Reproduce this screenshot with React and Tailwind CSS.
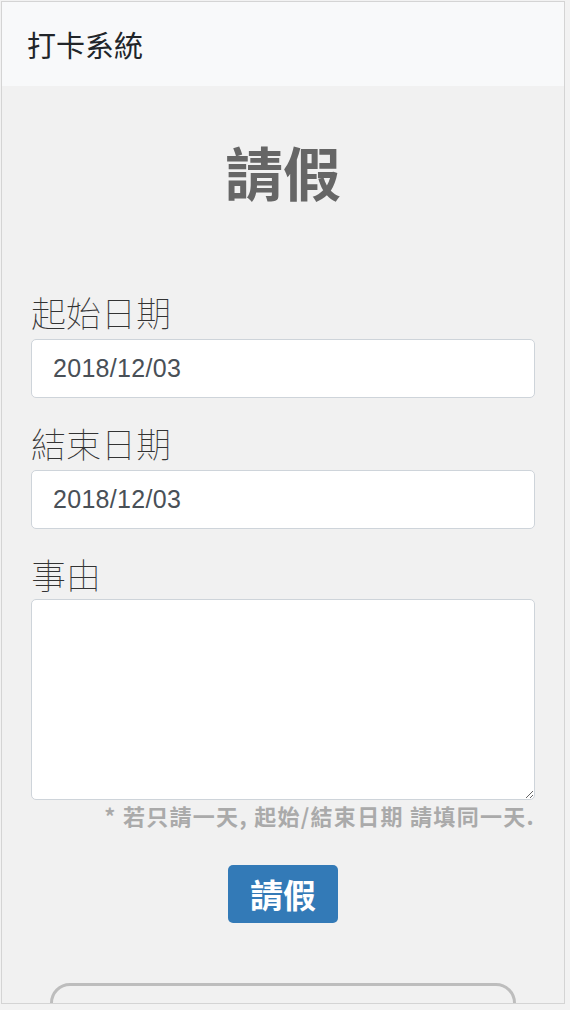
import React, { useState } from "react";

const font = { fontFamily: '"Noto Sans CJK TC", "Noto Sans", sans-serif' };
const numFont = { fontFamily: '"Liberation Sans", "Noto Sans", sans-serif' };

const App = () => {
  const [start, setStart] = useState("2018/12/03");
  const [end, setEnd] = useState("2018/12/03");
  const [reason, setReason] = useState("");

  return (
    <div className="w-[570px] h-[1010px] bg-[#f2f2f2] overflow-hidden" style={font}>
      <div className="w-[564px] h-[1003px] ml-px mt-px border border-[#d4d4d4] bg-[#f1f1f1] overflow-hidden">
        <nav className="h-[84px] bg-[#f8f9fa] flex items-center pl-[25px]">
          <span className="text-[29px] text-[#212529] leading-none">打卡系統</span>
        </nav>

        <div className="px-[29px] flex flex-col">
          <h1 className="text-center text-[58px] font-bold text-[#666666] leading-none mt-[56px] mb-[96px]">請假</h1>

          <label className="text-[35px] font-thin text-[#333333] leading-none mb-[10px] -mt-[2px]">起始日期</label>
          <input
            value={start}
            onChange={(e) => setStart(e.target.value)}
            className="h-[59px] w-full bg-white border border-[#ced4da] rounded-[5px] pl-[21px] text-[25px] tracking-[0.3px] text-[#495057] outline-none"
            style={numFont}
          />

          <label className="text-[35px] font-thin text-[#333333] leading-none mt-[27px] mb-[10px]">結束日期</label>
          <input
            value={end}
            onChange={(e) => setEnd(e.target.value)}
            className="h-[59px] w-full bg-white border border-[#ced4da] rounded-[5px] pl-[21px] text-[25px] tracking-[0.3px] text-[#495057] outline-none"
            style={numFont}
          />

          <label className="text-[35px] font-thin text-[#333333] leading-none mt-[27px] mb-[8px]">事由</label>
          <textarea
            value={reason}
            onChange={(e) => setReason(e.target.value)}
            className="h-[201px] w-full bg-white border border-[#ced4da] rounded-[5px] outline-none block"
          />

          <p className="text-right text-[22px] font-bold tracking-[1.3px] text-[#aaaaaa] leading-none mt-[4px]">* 若只請一天, 起始/結束日期 請填同一天.</p>

          <div className="flex justify-center mt-[39px]">
            <button className="w-[110px] h-[58px] bg-[#337ab7] text-white text-[33px] font-bold rounded-[5px] leading-none">請假</button>
          </div>

          <div className="mx-[19px] mt-[60px] h-[60px] border-[3px] border-[#bdbdbd] rounded-[20px]"></div>
        </div>
      </div>
    </div>
  );
};

export default App;
